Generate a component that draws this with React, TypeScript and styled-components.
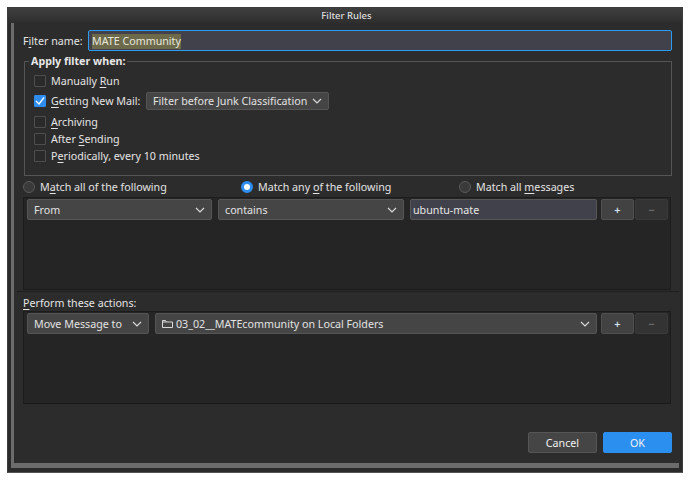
import React from "react";
import styled, { createGlobalStyle } from "styled-components";

const Global = createGlobalStyle`
  html, body { margin: 0; padding: 0; background: #fff; }
  body { font-family: "Noto Sans", "Open Sans", sans-serif; font-size: 10.7px; color: #e4e4e4; }
  * { box-sizing: border-box; }
  u { text-underline-offset: 1.5px; text-decoration-thickness: 1px; }
`;

const Window = styled.div`
  margin: 7px;
  width: 676px;
  height: 466px;
  background: #2b2b2b;
  border: 1px solid #3c3c3c;
  border-bottom-color: #555;
  display: flex;
  flex-direction: column;
  padding: 0 3px 4px 3px;
`;
const TitleBar = styled.div`
  height: 15px;
  margin: 0 -3px;
  padding-left: 3px;
  flex: none;
  display: flex;
  align-items: center;
  justify-content: center;
  font-size: 9.5px;
  font-weight: 500;
  color: #dcdcdc;
  background: linear-gradient(#3f3f3f, #2e2e2e);
`;
const Frame = styled.div`
  flex: 1;
  min-height: 0;
  border-left: 3px solid #6c6c6c;
  border-bottom: 5px solid #6c6c6c;
  padding: 7px 7px 10px 9px;
  display: flex;
  flex-direction: column;
  background: #2c2c2c;
`;
const NameRow = styled.div`
  display: flex;
  align-items: center;
  height: 21px;
  flex: none;
`;
const NameLabel = styled.span`
  width: 65px;
  flex: none;
  padding-top: 1px;
`;
const NameField = styled.div`
  flex: 1;
  height: 21px;
  background: #40414a;
  border: 1px solid #2d9cf0;
  border-radius: 2px;
  padding: 1px 3px 0;
  display: flex;
  align-items: center;
`;
const Selected = styled.span`
  background: #6d6a4c;
  color: #e8e8dc;
  line-height: 15px;
`;
const Group = styled.fieldset`
  flex: none;
  margin: 5px 0 0 1px;
  width: 648px;
  height: 120px;
  border: 1px solid #555;
  padding: 0 0 0 9px;
  min-width: 0;
`;
const Legend = styled.legend`
  font-weight: 700;
  color: #e8e8e8;
  padding: 0 2px;
  margin-left: -5px;
  line-height: 10px;
  font-size: 10.7px;
`;
const CheckRow = styled.div<{ $h: number }>`
  display: flex;
  align-items: center;
  gap: 5px;
  height: ${(p) => p.$h}px;
`;
const CheckList = styled.div`
  padding-top: 6px;
`;
const MailLabel = styled.span`
  width: 90px;
  flex: none;
`;
const Box = styled.span<{ $on?: boolean }>`
  width: 12px;
  height: 12px;
  flex: none;
  border-radius: 1px;
  border: 1px solid ${(p) => (p.$on ? "#2d8ef0" : "#4f4f4f")};
  background: ${(p) => (p.$on ? "#2d8ef0" : "#2a2a2a")};
  display: flex;
  align-items: center;
  justify-content: center;
`;
const Select = styled.div<{ $w?: number; $h?: number }>`
  height: ${(p) => p.$h ?? 21}px;
  width: ${(p) => p.$w}px;
  flex: none;
  background: #454545;
  border: 1px solid #555;
  border-radius: 2px;
  padding: 0 6px;
  display: flex;
  align-items: center;
  justify-content: space-between;
  color: #e2e2e2;
`;
const SelectLabel = styled.span`
  display: flex;
  align-items: center;
  gap: 3px;
  white-space: nowrap;
`;
const RadioRow = styled.div`
  flex: none;
  display: grid;
  grid-template-columns: 218px 218px 1fr;
  height: 21px;
  align-items: center;
`;
const RadioItem = styled.div`
  display: flex;
  align-items: center;
  gap: 5px;
`;
const Radio = styled.span<{ $on?: boolean }>`
  width: 12px;
  height: 12px;
  border-radius: 50%;
  flex: none;
  background: ${(p) => (p.$on ? "#fff" : "#3a3a3a")};
  border: ${(p) => (p.$on ? "3px solid #2d8ef0" : "1px solid #5a5a5a")};
`;
const List = styled.div`
  flex: none;
  width: 648px;
  height: 93px;
  background: #252525;
  border: 1px solid #1c1c1c;
  border-bottom-color: #1a1a1a;
  padding: 1px 3px;
  display: flex;
  flex-direction: column;
`;
const ListRow = styled.div`
  display: flex;
  align-items: center;
`;
const TextField = styled.div`
  width: 187px;
  height: 21px;
  flex: none;
  margin-left: 6px;
  background: #40414a;
  border: 1px solid #565656;
  border-radius: 2px;
  padding: 0 2px;
  display: flex;
  align-items: center;
  color: #e6e6e6;
`;
const IconButton = styled.div<{ $off?: boolean }>`
  width: 33px;
  height: 21px;
  flex: none;
  background: ${(p) => (p.$off ? "#333" : "#424242")};
  border: 1px solid ${(p) => (p.$off ? "#3a3a3a" : "#505050")};
  border-radius: 2px;
  color: ${(p) => (p.$off ? "#6e6e6e" : "#d8e6f4")};
  display: flex;
  align-items: center;
  justify-content: center;
  font-size: 11px;
  font-weight: 600;
  margin-left: ${(p) => (p.$off ? "1px" : "4px")};
`;
const Divider = styled.div`
  flex: none;
  height: 1px;
  margin: 1px -7px 0 -6px;
  background: #1e1e1e;
`;
const ActionsLabel = styled.div`
  flex: none;
  height: 19px;
  display: flex;
  align-items: center;
  padding-top: 2px;
`;
const Footer = styled.div`
  flex: 1;
  display: flex;
  align-items: flex-end;
  justify-content: flex-end;
  gap: 6px;
  width: 649px;
`;
const Btn = styled.div<{ $primary?: boolean }>`
  width: 69px;
  height: 21px;
  border-radius: 2px;
  display: flex;
  align-items: center;
  justify-content: center;
  background: ${(p) => (p.$primary ? "#2b8fef" : "#454545")};
  border: 1px solid ${(p) => (p.$primary ? "#2b8fef" : "#565656")};
  color: #f2f2f2;
`;
const Spacer = styled.div`
  width: 6px;
  flex: none;
`;

const Chevron = () => (
  <svg width="10" height="6" viewBox="0 0 10 6" fill="none" stroke="#dcdcdc" strokeWidth="1.1">
    <path d="M1 1l4 4 4-4" />
  </svg>
);
const Tick = () => (
  <svg width="10" height="10" viewBox="0 0 10 10" fill="none" stroke="#fff" strokeWidth="1.3">
    <path d="M1 5l3 3 5-6.5" />
  </svg>
);
const Folder = () => (
  <svg width="11" height="10" viewBox="0 0 11 10" fill="none" stroke="#d8d8d8" strokeWidth="1">
    <path d="M.5 8.500v-7h3l1 1.500h6v5.500z M.5 3h4" />
  </svg>
);

export default function App() {
  return (
    <>
      <Global />
      <Window>
        <TitleBar>Filter Rules</TitleBar>
        <Frame>
          <NameRow>
            <NameLabel>
              F<u>i</u>lter name:
            </NameLabel>
            <NameField>
              <Selected>MATE Community</Selected>
            </NameField>
          </NameRow>
          <Group>
            <Legend>Apply filter when:</Legend>
            <CheckList>
              <CheckRow $h={18}>
                <Box />
                <span>
                  Manually <u>R</u>un
                </span>
              </CheckRow>
              <CheckRow $h={22}>
                <Box $on>
                  <Tick />
                </Box>
                <MailLabel>
                  <u>G</u>etting New Mail:
                </MailLabel>
                <Select $w={183} $h={18}>
                  <SelectLabel>Filter before Junk Classification</SelectLabel>
                  <Chevron />
                </Select>
              </CheckRow>
              <CheckRow $h={20}>
                <Box />
                <span>
                  <u>A</u>rchiving
                </span>
              </CheckRow>
              <CheckRow $h={14}>
                <Box />
                <span>
                  After <u>S</u>ending
                </span>
              </CheckRow>
              <CheckRow $h={20}>
                <Box />
                <span>
                  P<u>e</u>riodically, every 10 minutes
                </span>
              </CheckRow>
            </CheckList>
          </Group>
          <RadioRow>
            <RadioItem>
              <Radio />
              <span>
                M<u>a</u>tch all of the following
              </span>
            </RadioItem>
            <RadioItem>
              <Radio $on />
              <span>
                Match any <u>o</u>f the following
              </span>
            </RadioItem>
            <RadioItem>
              <Radio />
              <span>
                Match all <u>m</u>essages
              </span>
            </RadioItem>
          </RadioRow>
          <List>
            <ListRow>
              <Select $w={185}>
                <SelectLabel>From</SelectLabel>
                <Chevron />
              </Select>
              <Spacer />
              <Select $w={186}>
                <SelectLabel>contains</SelectLabel>
                <Chevron />
              </Select>
              <TextField>ubuntu-mate</TextField>
              <IconButton>+</IconButton>
              <IconButton $off>−</IconButton>
            </ListRow>
          </List>
          <Divider />
          <ActionsLabel>
            <span>
              <u>P</u>erform these actions:
            </span>
          </ActionsLabel>
          <List>
            <ListRow>
              <Select $w={122}>
                <SelectLabel>Move Message to</SelectLabel>
                <Chevron />
              </Select>
              <Spacer />
              <Select $w={442}>
                <SelectLabel>
                  <Folder />
                  03_02__MATEcommunity on Local Folders
                </SelectLabel>
                <Chevron />
              </Select>
              <IconButton>+</IconButton>
              <IconButton $off>−</IconButton>
            </ListRow>
          </List>
          <Footer>
            <Btn>Cancel</Btn>
            <Btn $primary>OK</Btn>
          </Footer>
        </Frame>
      </Window>
    </>
  );
}
